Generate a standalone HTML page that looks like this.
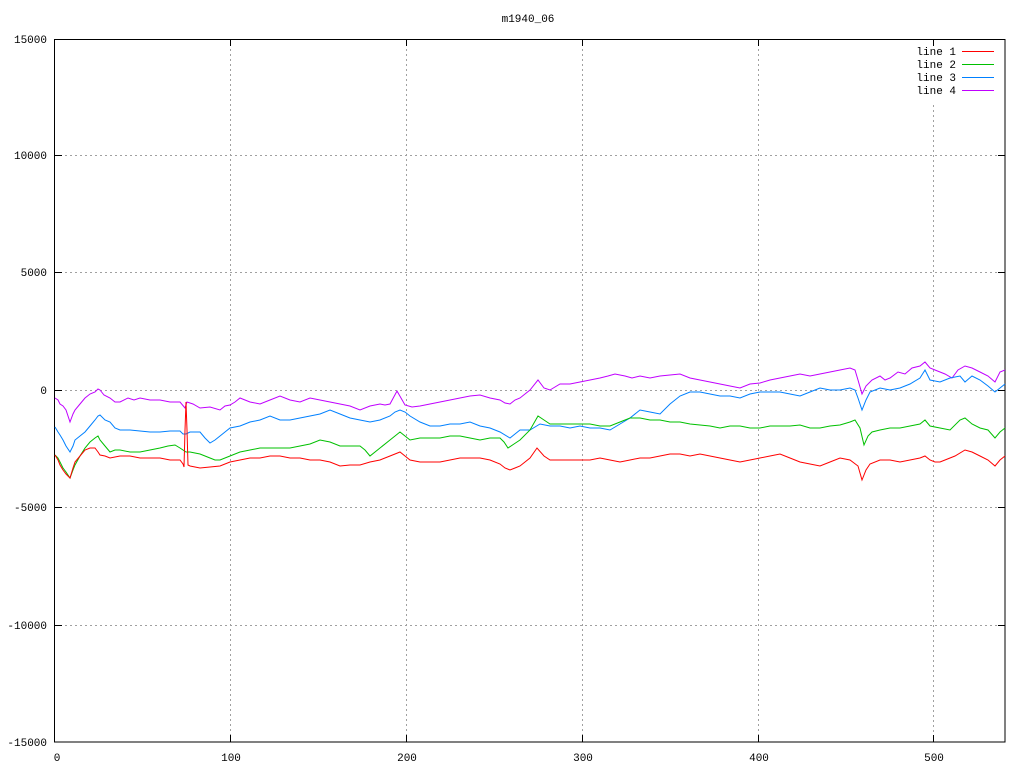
<!DOCTYPE html>
<html><head><meta charset="utf-8"><style>
html,body{margin:0;padding:0;background:#fff;}
svg{display:block;}
text{font-family:"Liberation Mono","DejaVu Sans Mono",monospace;font-size:11px;fill:#000;}
</style></head><body>
<svg width="1024" height="768" viewBox="0 0 1024 768" xmlns="http://www.w3.org/2000/svg">
<rect width="1024" height="768" fill="#fff"/>
<g stroke="#a0a0a0" stroke-width="1" stroke-dasharray="2,3" fill="none">
<line x1="55" y1="155.5" x2="1005" y2="155.5"/>
<line x1="55" y1="272.5" x2="1005" y2="272.5"/>
<line x1="55" y1="390.5" x2="1005" y2="390.5"/>
<line x1="55" y1="507.5" x2="1005" y2="507.5"/>
<line x1="55" y1="625.5" x2="1005" y2="625.5"/>
<line x1="230.5" y1="39" x2="230.5" y2="742"/>
<line x1="406.5" y1="39" x2="406.5" y2="742"/>
<line x1="582.5" y1="39" x2="582.5" y2="742"/>
<line x1="758.5" y1="39" x2="758.5" y2="742"/>
<line x1="933.5" y1="105" x2="933.5" y2="742"/>
</g>
<g stroke="#000" stroke-width="1">
<rect x="54.5" y="39.5" width="950.5" height="702.5" fill="none"/>
<line x1="55" y1="155.5" x2="62" y2="155.5"/><line x1="998" y1="155.5" x2="1005" y2="155.5"/>
<line x1="55" y1="272.5" x2="62" y2="272.5"/><line x1="998" y1="272.5" x2="1005" y2="272.5"/>
<line x1="55" y1="390.5" x2="62" y2="390.5"/><line x1="998" y1="390.5" x2="1005" y2="390.5"/>
<line x1="55" y1="507.5" x2="62" y2="507.5"/><line x1="998" y1="507.5" x2="1005" y2="507.5"/>
<line x1="55" y1="625.5" x2="62" y2="625.5"/><line x1="998" y1="625.5" x2="1005" y2="625.5"/>
<line x1="230.5" y1="735" x2="230.5" y2="742"/><line x1="230.5" y1="39" x2="230.5" y2="46"/>
<line x1="406.5" y1="735" x2="406.5" y2="742"/><line x1="406.5" y1="39" x2="406.5" y2="46"/>
<line x1="582.5" y1="735" x2="582.5" y2="742"/><line x1="582.5" y1="39" x2="582.5" y2="46"/>
<line x1="758.5" y1="735" x2="758.5" y2="742"/><line x1="758.5" y1="39" x2="758.5" y2="46"/>
<line x1="933.5" y1="735" x2="933.5" y2="742"/><line x1="933.5" y1="39" x2="933.5" y2="46"/>
</g>
<text x="528" y="22" text-anchor="middle">m1940_06</text>
<g text-anchor="end">
<text x="47" y="43">15000</text>
<text x="47" y="159">10000</text>
<text x="47" y="276">5000</text>
<text x="47" y="394">0</text>
<text x="47" y="511">-5000</text>
<text x="47" y="629">-10000</text>
<text x="47" y="746">-15000</text>
</g>
<g text-anchor="middle">
<text x="57" y="761">0</text>
<text x="231" y="761">100</text>
<text x="407" y="761">200</text>
<text x="583" y="761">300</text>
<text x="759" y="761">400</text>
<text x="934" y="761">500</text>
</g>
<g text-anchor="end">
<text x="956" y="55">line 1</text>
<text x="956" y="68">line 2</text>
<text x="956" y="81">line 3</text>
<text x="956" y="94">line 4</text>
</g>
<line x1="962" y1="51.5" x2="994" y2="51.5" stroke="#ff0000"/>
<line x1="962" y1="64.5" x2="994" y2="64.5" stroke="#00c000"/>
<line x1="962" y1="77.5" x2="994" y2="77.5" stroke="#0080ff"/>
<line x1="962" y1="90.5" x2="994" y2="90.5" stroke="#c000ff"/>
<g fill="none" stroke-width="1">
<polyline stroke="#c000ff" points="55,398 58,400 60,404 63,406 66,410 70,422 73,414 75,410 80,404 85,398 90,394 95,392 98,389 100,390 104,395 110,398 115,402 120,402 128,398 134,400 140,398 150,400 160,400 170,402 180,402 185,408 187,402 193,404 200,408 210,407 220,410 225,406 230,405 235,402 240,398 250,402 260,404 270,400 280,396 290,400 300,402 310,398 320,400 330,402 340,404 350,406 360,410 370,406 380,404 385,405 390,404 397,391 401,398 405,405 412,407 420,406 430,404 440,402 450,400 460,398 470,396 480,395 490,398 500,400 505,403 510,404 515,400 520,398 530,390 538,380 544,388 550,390 560,384 570,384 580,382 590,380 600,378 608,376 615,374 625,376 632,378 640,376 650,378 660,376 670,375 680,374 690,378 700,380 710,382 720,384 730,386 740,388 750,384 760,383 770,380 780,378 790,376 800,374 810,376 820,374 830,372 840,370 850,368 855,370 858,380 862,394 866,386 872,380 880,376 885,380 890,378 898,372 905,374 912,368 920,366 925,362 930,368 935,370 940,372 945,374 952,378 958,370 965,366 972,368 980,372 988,376 995,382 1000,372 1005,370"/>
<polyline stroke="#0080ff" points="55,427 58,432 60,435 63,440 66,446 70,452 73,446 75,440 80,436 85,432 90,426 95,420 98,416 100,415 105,420 110,422 115,428 120,430 130,430 140,431 150,432 160,432 170,431 180,431 183,434 186,434 190,432 200,432 205,438 210,443 215,440 220,436 225,432 230,428 240,426 250,422 260,420 270,416 280,420 290,420 300,418 310,416 320,414 330,410 340,414 350,418 360,420 370,422 380,420 390,416 395,412 400,410 405,412 410,416 420,422 430,426 440,426 450,424 460,424 470,422 480,426 490,428 500,432 510,438 515,434 520,430 530,430 540,424 550,426 560,426 570,428 580,426 590,428 600,428 610,430 620,424 630,418 640,410 650,412 660,414 670,404 680,396 690,392 700,392 710,394 720,396 730,396 740,398 750,394 760,392 770,392 780,392 790,394 800,396 810,392 820,388 830,390 840,390 850,388 855,390 858,398 862,410 866,400 870,392 880,388 890,390 900,388 910,384 920,378 925,370 930,380 940,382 950,378 960,376 965,382 972,376 980,380 988,386 995,392 1000,388 1005,384"/>
<polyline stroke="#00c000" points="55,455 58,458 60,462 63,468 66,472 70,478 73,470 75,465 80,456 85,448 90,442 95,438 98,436 100,440 105,446 110,452 115,450 120,450 130,452 140,452 150,450 160,448 168,446 175,445 180,448 186,452 190,452 200,454 205,456 210,458 215,460 220,460 230,456 240,452 250,450 260,448 270,448 280,448 290,448 300,446 310,444 320,440 330,442 340,446 350,446 360,446 365,450 370,456 380,448 390,440 395,436 400,432 405,436 410,440 420,438 430,438 440,438 450,436 460,436 470,438 480,440 490,438 500,438 504,442 508,448 514,444 520,440 530,430 538,416 544,420 550,424 560,424 570,424 580,424 590,424 600,426 610,426 620,422 630,418 640,418 650,420 660,420 670,422 680,422 690,424 700,425 710,426 720,428 730,426 740,426 750,428 760,428 770,426 780,426 790,426 800,425 810,428 820,428 830,426 840,425 850,422 855,420 860,428 864,445 868,436 872,432 880,430 890,428 900,428 910,426 920,424 925,420 930,426 940,428 950,430 960,420 965,418 972,424 980,428 988,430 995,438 1000,432 1005,428"/>
<polyline stroke="#ff0000" points="55,455 58,460 60,465 63,470 66,474 70,478 73,468 75,462 80,456 85,450 90,448 95,448 98,452 100,455 105,456 110,458 120,456 130,456 140,458 145,458 150,458 160,458 170,460 180,460 183,464 184,467 185,430 186,402 187,430 188,465 190,466 200,468 210,467 220,466 230,462 240,460 250,458 260,458 270,456 280,456 290,458 300,458 310,460 320,460 330,462 340,466 350,465 360,465 370,462 380,460 390,456 395,454 400,452 405,456 410,460 420,462 430,462 440,462 450,460 460,458 470,458 480,458 490,460 500,464 505,468 510,470 515,468 520,466 530,458 537,448 544,456 550,460 560,460 570,460 580,460 590,460 600,458 610,460 620,462 630,460 640,458 650,458 660,456 670,454 680,454 690,456 700,454 710,456 720,458 730,460 740,462 750,460 760,458 770,456 780,454 790,458 800,462 810,464 820,466 830,462 840,458 850,460 858,466 862,480 866,470 870,464 880,460 890,460 900,462 910,460 920,458 925,456 930,460 935,462 940,462 945,460 955,456 965,450 972,452 980,456 988,460 995,466 1000,460 1005,456"/>
</g>
</svg>
</body></html>
